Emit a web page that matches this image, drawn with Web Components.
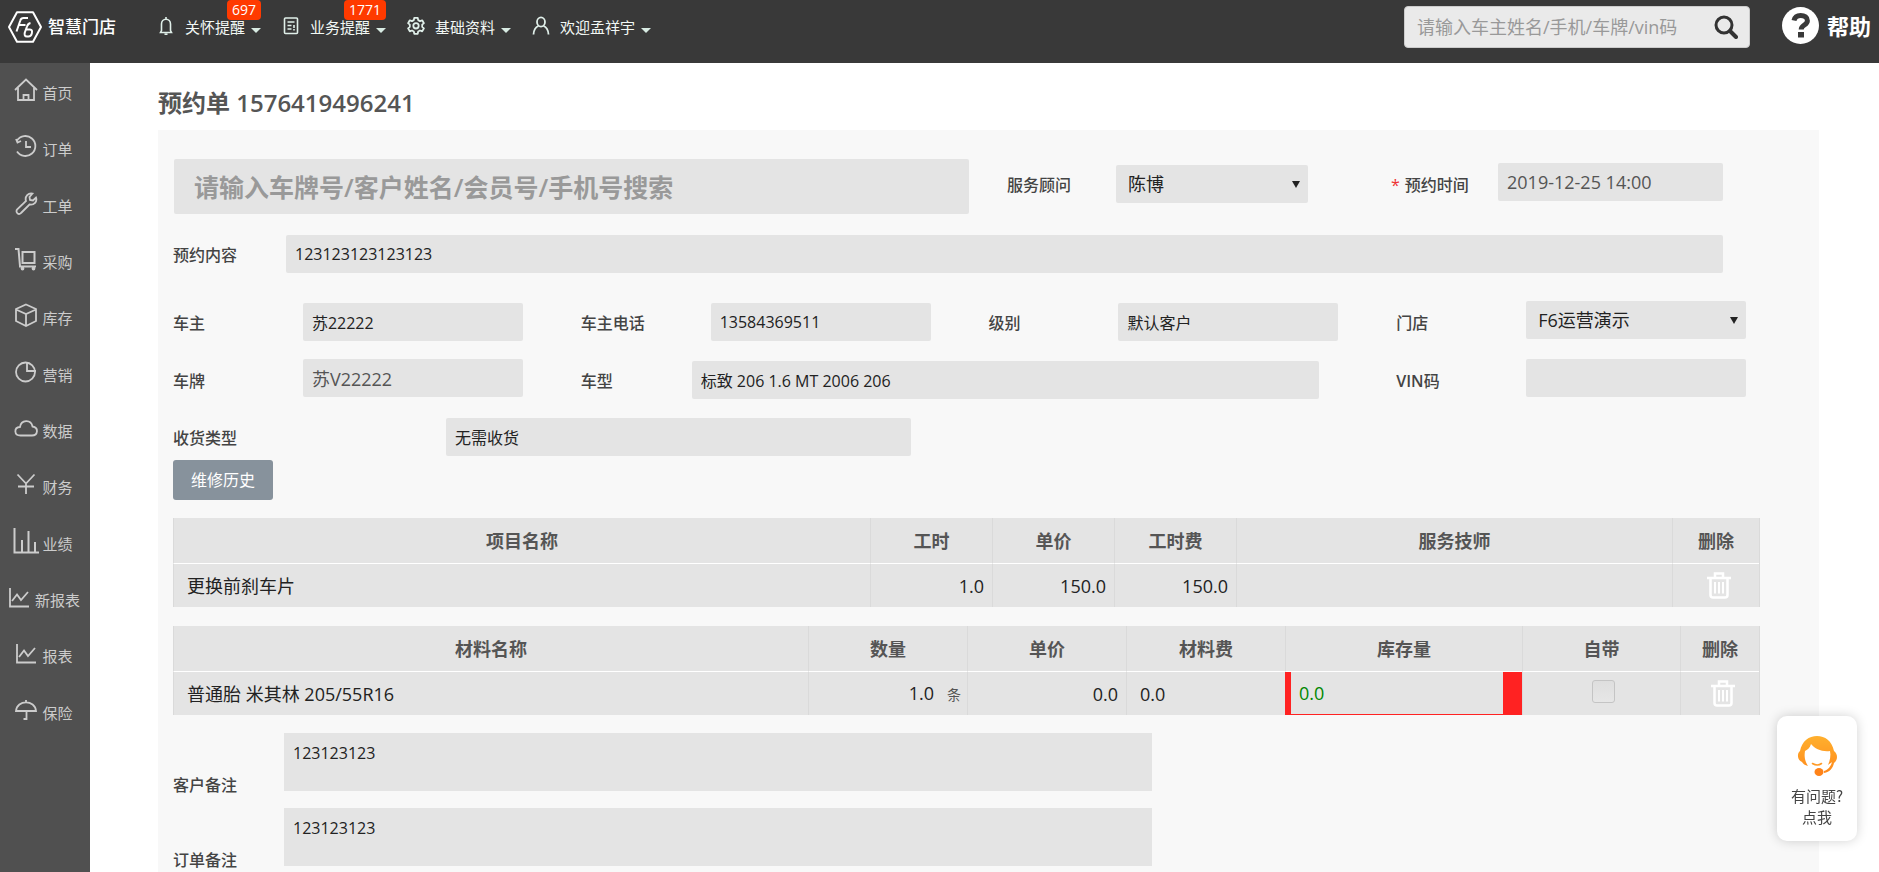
<!DOCTYPE html>
<html lang="zh-CN">
<head>
<meta charset="utf-8">
<title>预约单 - 智慧门店</title>
<style>
html, body { margin: 0; }
body { min-height: 100vh; background: #fff; font-family: "Open Sans", "Noto Sans CJK SC", sans-serif; font-size: 16px; line-height: 24px; color: #222; }
</style>
</head>
<body>
<shop-app></shop-app>

<template id="t-app">
  <style>
    :host { display: flex; flex-direction: column; min-height: 100vh; }
    .body { display: flex; flex: 1; }
    main { flex: 1; min-width: 0; display: flex; flex-direction: column; padding: 24px 60px 0 68px; }
    h1 { margin: 0; font-size: 24px; line-height: 32px; font-weight: 600; color: #555; }
    booking-form { flex: 1; margin-top: 11px; }
  </style>
  <app-header></app-header>
  <div class="body">
    <side-nav></side-nav>
    <main>
      <h1>预约单 1576419496241</h1>
      <booking-form></booking-form>
    </main>
  </div>
  <help-widget></help-widget>
</template>

<template id="t-header">
  <style>
    :host { display: flex; align-items: center; height: 54px; padding: 0 8px 9px 8px; background: #393939; color: #fff; }
    .logo { display: flex; align-items: center; gap: 6px; width: 149px; color: #fff; text-decoration: none; font-size: 17px; font-weight: 500; white-space: nowrap; }
    nav { display: flex; align-self: stretch; gap: 21px; }
    form { display: flex; align-items: center; box-sizing: border-box; width: 346px; height: 42px; margin-left: auto; padding: 0 11px 0 12px; background: #eaeaea; border: 1px solid #ccc; border-radius: 4px; }
    input { flex: 1; min-width: 0; border: 0; padding: 0; background: none; font: inherit; font-size: 18px; color: #333; outline: 0; }
    input::placeholder { color: #999; opacity: 1; }
    button { display: flex; padding: 0; border: 0; background: none; }
    .help { display: flex; align-items: center; gap: 8px; margin: 0 0 3px 32px; color: #fff; text-decoration: none; font-size: 22px; font-weight: 700; white-space: nowrap; }
    .q { width: 37px; height: 37px; }
  </style>
  <a class="logo" href="#">
    <svg width="34" height="32" viewBox="0 0 34 32" fill="none" stroke="#fff" stroke-width="2"><path d="M9 1.200h16L33 16l-8 14.800H9L1 16z" stroke-linejoin="round"/><path d="M8.500 20.500 12.300 9.500Q13 7 15.500 7H20M11 14h6.500M22.500 12Q20 12.500 19 15.500L16.800 21.500Q15.800 25.500 19 25.500h1.500Q23 25.500 23.800 22.500 24.800 18.500 22 18.500h-3.500"/></svg>
    <span>智慧门店</span>
  </a>
  <nav>
    <top-item badge="697" text="关怀提醒"><svg width="18" height="20" viewBox="0 0 18 20" fill="none" stroke="#e0efe9" stroke-width="1.600"><path d="M9 1v2M4.500 14.500V8a4.500 4.800 0 0 1 9 0v6.500l1 2h-11zM7.500 18.200h3"/></svg></top-item>
    <top-item badge="1771" text="业务提醒"><svg width="18" height="20" viewBox="0 0 18 20" fill="none" stroke="#e0efe9" stroke-width="1.600"><rect x="2.500" y="2" width="13" height="15.500" rx="1"/><path d="M5.500 6h7M5.500 9.500h4M5.500 13h4M12 9v3"/><path d="M12 13v1.500"/></svg></top-item>
    <top-item text="基础资料"><svg width="18" height="20" viewBox="0 0 18 20" fill="none" stroke="#e0efe9" stroke-width="1.800" stroke-linejoin="round"><path d="M7.300 1.800h3.400l.5 2.300 1.800 1 2.200-.8 1.700 2.900-1.700 1.500v2.200l1.700 1.500-1.700 2.900-2.200-.8-1.800 1-.5 2.300H7.300l-.5-2.300-1.800-1-2.200.8-1.700-2.900 1.700-1.500V8.700L1.100 7.200l1.700-2.900 2.200.8 1.800-1z"/><circle cx="9" cy="9.800" r="2.700"/></svg></top-item>
    <top-item text="欢迎孟祥宇"><svg width="18" height="20" viewBox="0 0 18 20" fill="none" stroke="#e0efe9" stroke-width="1.800"><ellipse cx="9" cy="6" rx="4" ry="4.600"/><path d="M1.500 18.500c.3-5 2.300-7.500 5-8.500M16.500 18.500c-.3-5-2.300-7.500-5-8.500"/></svg></top-item>
  </nav>
  <form>
    <input type="text" aria-label="搜索" placeholder="请输入车主姓名/手机/车牌/vin码">
    <button type="button" aria-label="搜索"><svg width="24" height="24" viewBox="0 0 24 24" fill="none" stroke="#333"><circle cx="10" cy="10" r="8" stroke-width="3"/><path d="M16 16l6 6" stroke-width="4" stroke-linecap="round"/></svg></button>
  </form>
  <a class="help" href="#">
    <svg class="q" viewBox="0 0 37 37"><circle cx="18.500" cy="18.500" r="18.500" fill="#fff"/><path d="M12 13.500c.8-3.600 3.300-5 6.600-5 4 0 6.800 1.900 6.800 5.200 0 4.400-6.200 4.200-6.200 8.800" fill="none" stroke="#393939" stroke-width="5"/><rect x="16" y="25" width="6" height="5.500" fill="#393939"/></svg>
    <span>帮助</span>
  </a>
</template>

<template id="t-top-item">
  <style>
    :host { display: block; position: relative; }
    a { display: flex; align-items: center; height: 100%; gap: 10px; color: #f2f8f5; text-decoration: none; font-size: 15px; white-space: nowrap; }
    ::slotted(svg) { display: block; margin-bottom: 2px; }
    .t { display: flex; align-items: center; gap: 6px; }
    i { border: 5px solid transparent; border-top-color: #d8ebe3; border-bottom: 0; margin-top: 6px; }
    b { position: absolute; top: 0; right: 0; padding: 0 5px; border-radius: 4px; background: #ff3a00; color: #fff; font-size: 14px; line-height: 20px; font-weight: 400; }
    b:empty { display: none; }
  </style>
  <a href="#"><slot></slot><span class="t"><span class="label"></span><i></i></span></a><b></b>
</template>

<template id="t-side">
  <style>
    :host { display: block; flex: none; width: 90px; background: #505050; }
    nav { display: grid; grid-template-rows: repeat(12, 1fr); height: 676px; padding-top: 2px; }
    svg { fill: none; stroke: #ccc; stroke-width: 1.800; }
  </style>
  <nav>
    <side-item><svg viewBox="0 0 26 26"><path d="M2 13 13 2.500 24 13M5 11v12h16V11M10.500 23v-5h5v5"/></svg>首页</side-item>
    <side-item><svg viewBox="0 0 26 26"><path d="M4 7.500A10 10 0 1 1 4 18.500M13 8v6h5M3 6l1.500 3.500L8 8"/></svg>订单</side-item>
    <side-item><svg viewBox="0 0 26 26"><path d="M19.500 3.500 16.500 7l.5 3 3 .5 3-3c1.500 4-2 8-6.500 7l-8.500 8.500a2.500 2.500 0 0 1-3.800-3.600L13 11c-1.500-4.500 2.500-8.500 6.500-7.500z"/></svg>工单</side-item>
    <side-item><svg viewBox="0 0 26 26"><path d="M2 3h3.500l1.500 17M6 20.500h17" stroke-width="2"/><rect x="9.500" y="6" width="12" height="11" stroke-width="2"/><circle cx="9.500" cy="22.500" r="1"/><circle cx="20.500" cy="22.500" r="1"/></svg>采购</side-item>
    <side-item><svg viewBox="0 0 26 26"><path d="M13 2.500 23 7v12l-10 5L3 19V7zM3 7.500l10 4.500 10-4.500M13 12v12"/></svg>库存</side-item>
    <side-item><svg viewBox="0 0 26 26"><circle cx="12.500" cy="13" r="9.500"/><path d="M14 3.500V12h9"/></svg>营销</side-item>
    <side-item><svg viewBox="0 0 26 26"><path d="M7.500 20.500C1 20.500.5 12.500 7 12c1-7.500 11-8 12.500-.5 6.500 1 5.500 9-.5 9z"/></svg>数据</side-item>
    <side-item><svg viewBox="0 0 26 26"><path d="M4.500 3.500 13 12.500 21.500 3.500M13 12.500V23M5 15.500h16"/></svg>财务</side-item>
    <side-item><svg viewBox="0 0 26 26"><path d="M1.500 0v24.500H26M9 25V12M15.500 25V3M22 25V14" stroke-width="2"/></svg>业绩</side-item>
    <side-item><svg viewBox="0 0 26 26"><path d="M4 4v18.500h19M6 17l5-6.500 4 5.500 7-8"/></svg>新报表</side-item>
    <side-item><svg viewBox="0 0 26 26"><path d="M4 4v18.500h19M6 17l5-6.500 4 5.500 7-8"/></svg>报表</side-item>
    <side-item><svg viewBox="0 0 26 26"><path d="M3 14C4 2.500 22 2.500 23 14zM13 5V3M13.500 14v8h-3"/></svg>保险</side-item>
  </nav>
</template>

<template id="t-side-item">
  <style>
    :host { display: flex; }
    a { flex: 1; display: flex; align-items: center; justify-content: center; gap: 3px; padding-right: 4px; color: #ccc; text-decoration: none; font-size: 15px; white-space: nowrap; }
    ::slotted(svg) { flex: none; width: 26px; height: 26px; margin-bottom: 6px; }
  </style>
  <a href="#"><slot></slot></a>
</template>

<template id="t-form">
  <style>
    :host { display: block; background: #f8f8f8; padding: 29px 15px 0; }
    .row { display: grid; align-items: start; }
    .top { grid-template-columns: 796fr 38fr 301fr 83fr 332fr 81fr; height: 55px; margin-bottom: 21px; }
    .top form-field { margin-top: 6px; }
    .top form-field:nth-of-type(1) { grid-column: 3; }
    .top form-field:nth-of-type(2) { grid-column: 5; }
    .quad { grid-template-columns: repeat(4, 1fr); }
    .wide { grid-column: span 2; }
    .search { box-sizing: border-box; min-width: 0; height: 55px; margin-left: 1px; padding: 0 20px; border: 0; border-radius: 2px; background: #e4e4e4; font: 600 25px "Open Sans", "Noto Sans CJK SC", sans-serif; }
    .search::placeholder { color: #999; opacity: 1; }
    button { display: block; width: 100px; height: 40px; padding: 0; border: 0; border-radius: 3px; background: #87929c; color: #fff; font: inherit; }
    labor-table, parts-table { margin-right: 44px; }
  </style>
  <div class="row top">
    <input class="search" type="text" aria-label="客户搜索" placeholder="请输入车牌号/客户姓名/会员号/手机号搜索">
    <form-field type="select" size="18" label="服务顾问" value="陈博" cols="109fr 192fr"></form-field>
    <form-field required raised size="18" label="预约时间" value="2019-12-25 14:00" tone="#555" cols="107fr 225fr"></form-field>
  </div>
  <form-field label="预约内容" value="123123123123123" cols="113fr 1437fr 81fr" style="margin-bottom:30px"></form-field>
  <div class="row quad" style="margin-bottom:20px">
    <form-field label="车主" value="苏22222"></form-field>
    <form-field label="车主电话" value="13584369511"></form-field>
    <form-field label="级别" value="默认客户"></form-field>
    <form-field type="select" raised size="18" label="门店" value="F6运营演示"></form-field>
  </div>
  <div class="row quad" style="margin-bottom:19px">
    <form-field raised size="18" label="车牌" value="苏V22222" tone="#555"></form-field>
    <form-field class="wide" label="车型" value="标致 206 1.6 MT 2006 206" cols="111fr 628fr 77fr"></form-field>
    <form-field raised label="<b>VIN</b>码" value=""></form-field>
  </div>
  <form-field label="收货类型" value="无需收货" cols="273fr 465fr 893fr" style="margin-bottom:4px"></form-field>
  <button type="button">维修历史</button>
  <labor-table style="margin-top:18px"></labor-table>
  <parts-table style="margin-top:19px"></parts-table>
  <note-field label="客户备注" value="123123123" style="margin-top:18px"></note-field>
  <note-field label="订单备注" value="123123123" style="margin-top:11px"></note-field>
</template>

<template id="t-table">
  <style>
    :host { display: block; }
    table { width: 100%; table-layout: fixed; border-collapse: separate; border-spacing: 0; background: #e4e4e4; border-right: 1px solid #dadada; font-size: 18px; line-height: 24px; }
    th, td { box-sizing: border-box; border-left: 1px solid #dadada; padding: 0 8px; white-space: nowrap; }
    th { height: 46px; border-bottom: 1px solid #fff; color: #555; font-weight: 600; }
    td { height: 43px; text-align: right; }
    .l { text-align: left; padding-left: 13px; }
    .c { text-align: center; }
    .stock { border-left: 6px solid #f22; border-right: 19px solid #f22; border-bottom: 1px solid #f22; text-align: left; color: #080; }
    small { margin-left: 13px; margin-right: -2px; font-size: 14px; color: #555; }
    button { display: inline-block; height: 28px; padding: 0; margin-left: 6px; border: 0; background: none; vertical-align: middle; }
    svg { display: block; }
    input { appearance: none; display: inline-block; box-sizing: border-box; width: 23px; height: 23px; margin: 0 0 4px 3px; border: 1px solid #c4c4c4; border-radius: 3px; background: linear-gradient(#dedede, #e6e6e6); vertical-align: middle; }
  </style>
</template>

<template id="t-help">
  <style>
    :host { display: block; position: fixed; right: 22px; bottom: 31px; }
    a { display: flex; flex-direction: column; align-items: center; box-sizing: border-box; width: 80px; height: 125px; padding-top: 19px; border-radius: 10px; background: #fff; box-shadow: 0 0 12px rgba(0,0,0,.18); color: #444; text-decoration: none; font-size: 15px; line-height: 21px; font-family: "Noto Sans CJK SC", sans-serif; }
    svg { margin-bottom: 8px; }
  </style>
  <a href="#">
    <svg width="42" height="42" viewBox="0 0 42 42"><defs><linearGradient id="g" x1="0" y1="0" x2="0" y2="1"><stop offset="0" stop-color="#ffb02e"/><stop offset="1" stop-color="#ff8a1c"/></linearGradient></defs><path fill="url(#g)" d="M4 16C6 6 13 1 21 1s15 5 17 15c4 3 4 9 0 12-1 5-4 9-10 10v-2c4-1 7-5 8-9-1 1-3 2-4 3 2-5 3-9 2-14-8 1-15-2-19-7-1 4-4 6-6 7-1 6 0 10 3 15-3-1-5-2-6-4-5-2-5-9-2-11z"/><ellipse cx="23" cy="37" rx="4.500" ry="4" fill="#ff8319"/><path d="M16.500 28.500q5 3 9 0" fill="none" stroke="#ff9a26" stroke-width="1.600" stroke-linecap="round"/></svg>
    <span>有问题?</span><span>点我</span>
  </a>
</template>

<script>
const attach = (el, id) => {
  const root = el.attachShadow({ mode: 'open' });
  root.append(document.getElementById(id).content.cloneNode(true));
  return root;
};
const simple = (tag, id) => customElements.define(tag, class extends HTMLElement {
  constructor() { super(); attach(this, id); }
});

customElements.define('top-item', class extends HTMLElement {
  connectedCallback() {
    if (this.shadowRoot) return;
    const root = attach(this, 't-top-item');
    root.querySelector('.label').textContent = this.getAttribute('text');
    root.querySelector('b').textContent = this.getAttribute('badge') || '';
  }
});

customElements.define('form-field', class extends HTMLElement {
  connectedCallback() {
    if (this.shadowRoot) return;
    const a = (n, d = '') => this.getAttribute(n) ?? d;
    const select = a('type') === 'select';
    const control = select
      ? `<select id="c"><option>${a('value')}</option></select><svg width="8" height="7" viewBox="0 0 8 7"><path d="M0 0h8L4 7z" fill="#222"/></svg>`
      : `<input id="c" type="text" value="${a('value')}">`;
    this.attachShadow({ mode: 'open' }).innerHTML = `
      <style>
        :host { display: grid; grid-template-columns: ${a('cols', '130fr 220fr 58fr')}; grid-template-rows: 38px; align-items: center; }
        label { padding-top: 2px; color: #444; font-weight: 500; white-space: nowrap; }
        label b { font-weight: 600; }
        label i { color: #e33; font-style: normal; font-weight: 400; margin-right: 5px; }
        .box { position: relative; display: flex; min-width: 0; }
        :host([raised]) .box { margin-bottom: 4px; }
        input, select { appearance: none; box-sizing: border-box; width: 100%; min-width: 0; height: 38px; margin: 0; padding: 0 9px; border: 0; border-radius: 2px; background: #e4e4e4; font: inherit; font-size: ${a('size', '16')}px; color: ${a('tone', '#222')}; outline: 0; }
        select { padding: 0 12px; }
        svg { position: absolute; right: 8px; top: 16px; pointer-events: none; }
      </style>
      <label for="c">${this.hasAttribute('required') ? '<i>*</i>' : ''}${a('label')}</label>
      <div class="box">${control}</div>`;
  }
});

customElements.define('note-field', class extends HTMLElement {
  connectedCallback() {
    if (this.shadowRoot) return;
    this.attachShadow({ mode: 'open' }).innerHTML = `
      <style>
        :host { display: grid; grid-template-columns: 111fr 868fr 652fr; height: 64px; }
        label { align-self: end; color: #444; font-weight: 500; }
        textarea { box-sizing: border-box; display: block; width: 100%; height: 58px; margin: 0; padding: 8px 9px; border: 0; background: #e4e4e4; font: inherit; color: #222; resize: none; outline: 0; }
      </style>
      <label for="n">${this.getAttribute('label')}</label>
      <textarea id="n">${this.getAttribute('value')}</textarea>`;
  }
});

const TRASH = `<button type="button" aria-label="删除"><svg width="24" height="27" viewBox="0 0 24 27" fill="none" stroke="#fff" stroke-width="2.500"><path d="M0 6h24M8 6V1.500h8V6M3.500 6v17q0 2.500 2.500 2.500h12q2.500 0 2.500-2.500V6"/><path d="M8 10v11.500M12 10v11.500M16 10v11.500" stroke-width="2"/></svg></button>`;
const table = (tag, widths, heads, row) => customElements.define(tag, class extends HTMLElement {
  constructor() {
    super();
    attach(this, 't-table').append(document.createRange().createContextualFragment(`<table>
      <colgroup><col>${widths.map(w => `<col style="width:${w}px">`).join('')}</colgroup>
      <thead><tr>${heads.map(h => `<th scope="col">${h}</th>`).join('')}</tr></thead>
      <tbody><tr>${row}</tr></tbody></table>`));
  }
});
table('labor-table', [122, 122, 122, 436, 87], ['项目名称', '工时', '单价', '工时费', '服务技师', '删除'],
  `<td class="l">更换前刹车片</td><td>1.0</td><td>150.0</td><td>150.0</td><td></td><td class="c">${TRASH}</td>`);
table('parts-table', [159, 159, 159, 237, 158, 79], ['材料名称', '数量', '单价', '材料费', '库存量', '自带', '删除'],
  `<td class="l">普通胎 米其林 205/55R16</td><td>1.0<small>条</small></td><td>0.0</td><td class="l">0.0</td><td class="stock">0.0</td><td class="c"><input type="checkbox" aria-label="自带"></td><td class="c">${TRASH}</td>`);

simple('side-item', 't-side-item');
simple('side-nav', 't-side');
simple('app-header', 't-header');
simple('booking-form', 't-form');
simple('help-widget', 't-help');
simple('shop-app', 't-app');
</script>
</body>
</html>
